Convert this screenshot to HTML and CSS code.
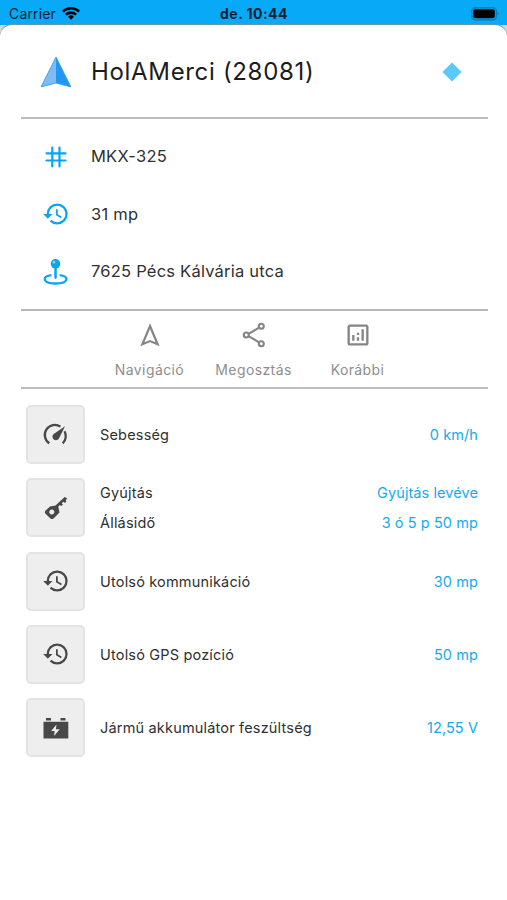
FILE: index.html
```html
<!DOCTYPE html>
<html lang="hu">
<head>
<meta charset="utf-8">
<title>HolAMerci</title>
<link rel="stylesheet" href="styles.css">
</head>
<body>
<svg class="defs" width="0" height="0">
  <symbol id="history" viewBox="0 0 24 24"><path d="M13 3a9 9 0 0 0-9 9H1l3.89 3.89.07.14L9 12H6c0-3.87 3.13-7 7-7s7 3.13 7 7-3.13 7-7 7c-1.93 0-3.68-.79-4.94-2.06l-1.42 1.42A8.954 8.954 0 0 0 13 21a9 9 0 0 0 0-18zm-1 5v5l4.28 2.54.72-1.21-3.5-2.08V8H12z"/></symbol>
</svg>
<header class="status">
  <div class="carrier"><span>Carrier</span>
    <svg class="wifi" viewBox="0 0 18 14"><path d="M0 4.7A12.8 12.8 0 0 1 18 4.7L16.2 6.6A10.2 10.2 0 0 0 1.8 6.6ZM3 7.8A8.6 8.6 0 0 1 15 7.8L13.2 9.6A6 6 0 0 0 4.8 9.6ZM6 10.8A4.3 4.3 0 0 1 12 10.8L9 13.8Z"/></svg>
  </div>
  <div class="clock">de. 10:44</div>
  <div class="power"><svg class="battery" viewBox="0 0 29 14"><rect x=".7" y=".8" width="24.6" height="12" rx="3.5" fill="none" stroke="#087aab" stroke-width="1.2"/><rect x="2.2" y="2.3" width="21.6" height="9" rx="2"/><path d="M26.500 4.800q2 2 0 4z" fill="#087aab"/></svg></div>
</header>
<main class="sheet">
  <section class="head">
    <svg class="arrow" viewBox="0 0 32 32"><path d="M16 1 1 31l15-4z" fill="#7fbcf5"/><path d="M16 1 31 31l-15-4z" fill="#2196f3"/><path d="M16 1 1.200 30.800 16 27l14.800 3.800z" fill="none" stroke="#359bf0" stroke-width=".9"/></svg>
    <h1>HolAMerci (28081)</h1>
    <svg class="diamond" viewBox="0 0 20 20"><path d="M10 .5 19.500 10 10 19.500.5 10z" fill="#5ac8fa"/></svg>
  </section>
  <section class="info">
    <div class="fact"><svg class="icon" viewBox="0 0 28 28"><path d="M10.300 4.500v19M17.500 4.500v19M4.500 10.300h19M4.500 17.500h19" fill="none" stroke="currentColor" stroke-width="2.2" stroke-linecap="round"/></svg><span>MKX-325</span></div>
    <div class="fact"><svg class="icon"><use href="#history"/></svg><span>31 mp</span></div>
    <div class="fact"><svg class="icon" viewBox="0 0 28 28"><circle cx="13.5" cy="5.8" r="4.8"/><circle cx="12" cy="4.2" r="1.2" fill="#a5dcfb"/><path d="M12.300 10h2.500v9.500q-1.250 3-2.500 0z"/><path d="M9.500 17.100C5 17.600 2.700 19.200 2.700 21c0 2.900 4.800 4.500 10.900 4.500s10.900-1.600 10.900-4.500c0-1.800-2.300-3.400-6.900-3.900" fill="none" stroke="currentColor" stroke-width="2.3"/></svg><span>7625 Pécs Kálvária utca</span></div>
  </section>
  <nav class="actions">
    <div class="action"><svg viewBox="0 0 28 28"><path d="m14 5 7.600 18.300-7.600-3.200-7.600 3.200z" fill="none" stroke="currentColor" stroke-width="2.2"/></svg><span>Navigáció</span></div>
    <div class="action"><svg viewBox="0 0 28 28"><g fill="none" stroke="currentColor" stroke-width="2.1"><path d="m9 12.700 10-6M9 15.300l10 6"/><circle cx="6.3" cy="14" r="2.5"/><circle cx="21.300" cy="5.300" r="2.500"/><circle cx="21.300" cy="22.700" r="2.500"/></g></svg><span>Megosztás</span></div>
    <div class="action"><svg viewBox="0 0 24 24"><path d="M19 3H5c-1.100 0-2 .9-2 2v14c0 1.100.9 2 2 2h14c1.100 0 2-.9 2-2V5c0-1.100-.9-2-2-2zm0 16H5V5h14v14zM7 12h2v5H7zm8-5h2v10h-2zm-4 7h2v3h-2zm0-4h2v2h-2z"/></svg><span>Korábbi</span></div>
  </nav>
  <section class="readings">
    <div class="reading"><div class="tile"><svg viewBox="0 0 28 28"><path d="M7.300 22.300A9.800 9.800 0 0 1 18.400 5.600M22.500 10.300a9.800 9.800 0 0 1-1.800 12" fill="none" stroke="currentColor" stroke-width="2.3"/><path d="M23 5.200 17.100 17.200A3.500 3.500 0 1 1 11.700 13z"/></svg></div><div class="lines"><p><span>Sebesség</span><b>0 km/h</b></p></div></div>
    <div class="reading"><div class="tile"><svg viewBox="0 0 28 28"><path fill-rule="evenodd" d="M22.700 3.100 25.300 4.600 23.800 6.100 24.300 8 22.500 8.700 21.200 7.700 19.800 9.200 21 10.600 19.300 12 17.800 11.100 16.300 12.800 17.500 18.500 11.500 24.500Q10 25.600 8.500 24.500L3.300 19.500Q2.300 18 3.400 16.700L8 12.500 13.500 11.500ZM9.800 15.600a2.500 2.500 0 1 0 .01 0z"/></svg></div><div class="lines"><p><span>Gyújtás</span><b>Gyújtás levéve</b></p><p><span>Állásidő</span><b>3 ó 5 p 50 mp</b></p></div></div>
    <div class="reading"><div class="tile"><svg><use href="#history"/></svg></div><div class="lines"><p><span>Utolsó kommunikáció</span><b>30 mp</b></p></div></div>
    <div class="reading"><div class="tile"><svg><use href="#history"/></svg></div><div class="lines"><p><span>Utolsó GPS pozíció</span><b>50 mp</b></p></div></div>
    <div class="reading"><div class="tile"><svg viewBox="0 0 28 28"><path fill-rule="evenodd" d="M4 4h5v2.600H4zM18.500 4h5v2.600h-5zM1.500 7.700h24.800v16.800H1.500zM14.500 10.500 9.200 17h3.500l-.6 5 5.600-6.800h-3.800z"/></svg></div><div class="lines"><p><span>Jármű akkumulátor feszültség</span><b>12,55 V</b></p></div></div>
  </section>
</main>
</body>
</html>
```
FILE: styles.css
```css
* { box-sizing: border-box; }
body { margin: 0; height: 900px; overflow: hidden; background: linear-gradient(#08a9f6 25px, #c9d3d8 25px, #ffffff 45px); font-family: Inter, "Noto Sans", sans-serif; color: #303030; }
svg { display: block; fill: currentColor; flex: none; }
.defs { position: absolute; }
.status { height: 25px; padding: 3px 7px 0 9px; display: grid; grid-template-columns: 1fr auto 1fr; align-items: center; color: #042132; font-size: 14px; line-height: 20px; }
.carrier { display: flex; align-items: center; gap: 6px; letter-spacing: .15px; }
.wifi { width: 18px; height: 14px; color: #000; margin-top: -2px; }
.clock { font-weight: 700; letter-spacing: .45px; margin-right: 1px; }
.power { display: flex; justify-content: flex-end; }
.battery { width: 29px; height: 14px; color: #000; margin-top: -1px; }
.sheet { height: 875px; padding: 0 19px 0 21px; background: #fff; border-radius: 12px 12px 0 0; box-shadow: 0 -1px 1px #7995a2; }
.head { height: 94px; padding: 2px 26px 0 19px; display: flex; align-items: center; border-bottom: 2px solid #bdbdbd; }
.arrow { width: 32px; height: 32px; }
h1 { flex: 1; margin: 0 0 0 19px; font-size: 24px; line-height: 30px; font-weight: 400; letter-spacing: .67px; color: #1c1c1c; }
.diamond { width: 20px; height: 20px; }
.info { height: 192px; padding: 9px 0 0 20.5px; border-bottom: 2px solid #b8b8b8; }
.fact { height: 57.5px; display: flex; align-items: center; gap: 21.5px; font-size: 16.5px; letter-spacing: .22px; }
.fact span { margin-top: -1px; }
.icon { width: 28px; height: 28px; color: #08a5f0; }
.actions { height: 78px; padding-right: 2px; display: grid; grid-template-columns: repeat(3, 104px); justify-content: center; border-bottom: 2px solid #bdbdbd; color: #858585; }
.action { padding-top: 10px; display: flex; flex-direction: column; align-items: center; font-size: 14px; line-height: 20px; letter-spacing: .4px; color: #8e8e8e; }
.action svg { width: 28px; height: 28px; color: #858585; margin-bottom: 11px; }
.readings { padding: 16px 10px 0 5px; display: grid; gap: 14.3px; }
.reading { height: 59px; display: flex; align-items: center; gap: 15px; font-size: 14.5px; letter-spacing: .18px; }
.tile { width: 59px; height: 59px; flex: none; display: grid; place-items: center; border: 2px solid #e3e3e3; border-radius: 5px; background: #eeeeee; color: #484848; }
.tile svg { width: 28px; height: 28px; }
.lines { flex: 1; }
.lines p { margin: 0; height: 30px; display: flex; align-items: center; justify-content: space-between; }
.lines b { font-weight: 400; color: #15aaf0; letter-spacing: .08px; }
```
